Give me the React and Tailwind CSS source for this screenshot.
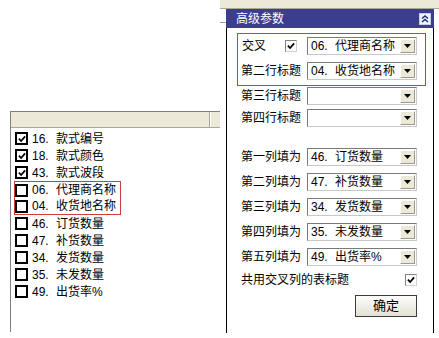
import React from "react";

const FONT = { fontFamily: '"Liberation Sans", "Noto Sans CJK SC", sans-serif' };

function Tick({ size = 9 }) {
  return (
    <svg width={size} height={size} viewBox="0 0 9 9">
      <path d="M1 4.2 L3.5 6.8 L8 1.6" fill="none" stroke="#000" strokeWidth="2" />
    </svg>
  );
}

function LeftBox({ checked }) {
  return (
    <div className="w-[13px] h-[13px] border-2 border-black bg-white flex items-center justify-center shrink-0">
      {checked ? <Tick size={8} /> : null}
    </div>
  );
}

function LeftRow({ num, text, checked, h = "h-[17px]", pl = "pl-[4px]" }) {
  return (
    <div className={`flex items-center ${h} ${pl}`}>
      <LeftBox checked={checked} />
      <span className="ml-[4px] w-[24px] shrink-0">{num}</span>
      <span className="whitespace-nowrap">{text}</span>
    </div>
  );
}

function WinBox({ checked }) {
  return (
    <div className="w-[12px] h-[12px] bg-white border border-t-[#808080] border-l-[#808080] border-r-[#d4d0c8] border-b-[#d4d0c8] flex items-center justify-center shrink-0">
      {checked ? <Tick size={8} /> : null}
    </div>
  );
}

function Select({ num, text }) {
  return (
    <div className="w-[110px] h-[18px] shrink-0 flex items-center bg-white border border-t-[#7a7a7a] border-l-[#7a7a7a] border-r-[#c8c8c8] border-b-[#c8c8c8]">
      <div className="flex-1 flex items-center pl-[3px] whitespace-nowrap overflow-hidden">
        {num ? <span className="w-[24px] shrink-0">{num}</span> : null}
        {text ? <span>{text}</span> : null}
      </div>
      <div className="w-[15px] h-[14px] mr-[1px] shrink-0 flex items-center justify-center bg-[#ece9d8] border border-t-white border-l-white border-r-[#9d9a8c] border-b-[#9d9a8c]">
        <svg width="7" height="4" viewBox="0 0 7 4">
          <path d="M0 0 H7 L3.5 4 Z" fill="#000" />
        </svg>
      </div>
    </div>
  );
}

function Row({ label, num, text, mt }) {
  return (
    <div className={`flex items-center h-[18px] pl-[14px] ${mt}`}>
      <span className="w-[66px] shrink-0 whitespace-nowrap">{label}</span>
      <Select num={num} text={text} />
    </div>
  );
}

export default function App() {
  return (
    <div
      className="w-[439px] h-[338px] bg-white flex text-[12px] leading-[14px] text-black overflow-hidden"
      style={FONT}
    >
      {/* left column */}
      <div className="w-[220px] shrink-0 pt-[111px] pl-[10px]">
        <div className="h-[221px] border-l border-t border-[#808080] flex flex-col">
          <div className="h-[16px] flex bg-[#ece9d8] border-b border-[#aca899]">
            <div className="w-[199px] border-r border-[#aca899]" />
            <div className="flex-1 border-l border-white" />
          </div>
          <div className="pt-[2px] flex flex-col">
            <LeftRow num="16." text="款式编号" checked />
            <LeftRow num="18." text="款式颜色" checked />
            <LeftRow num="43." text="款式波段" checked />
            <div className="ml-[3px] w-[107px] border border-[#d03c3c]">
              <LeftRow num="06." text="代理商名称" h="h-[16px]" pl="pl-0" />
              <LeftRow num="04." text="收货地名称" h="h-[16px]" pl="pl-0" />
            </div>
            <LeftRow num="46." text="订货数量" />
            <LeftRow num="47." text="补货数量" />
            <LeftRow num="34." text="发货数量" />
            <LeftRow num="35." text="未发数量" />
            <LeftRow num="49." text="出货率%" />
          </div>
        </div>
      </div>

      {/* right column */}
      <div className="flex-1 flex flex-col">
        <div className="h-[9px] bg-[#ece9d8] border-b border-[#aca899]" />
        <div className="flex flex-1">
          <div className="w-[6px] shrink-0 pt-[13px]">
            <div className="h-px bg-[#9a9a9a]" />
          </div>
          <div className="w-[208px] h-[324px] shrink-0 flex flex-col">
            <div className="h-[19px] bg-[#3d3d90] flex items-center justify-between pl-[10px] pr-[3px] text-white">
              <span className="leading-[14px]">高级参数</span>
              <div className="w-[12px] h-[12px] bg-[#f2f4fb] border border-[#c9cde8] flex items-center justify-center">
                <svg width="8" height="8" viewBox="0 0 8 8">
                  <path d="M1 3.5 L4 1 L7 3.5 M1 7 L4 4.5 L7 7" fill="none" stroke="#1c2a6e" strokeWidth="1.4" />
                </svg>
              </div>
            </div>
            <div className="flex-1 border-l border-r border-black flex flex-col">
              <div className="ml-[10px] mt-[5px] w-[189px] p-px bg-[#d03c3c]">
                <div className="bg-white pt-[3px] pb-[5px] pl-[3px] flex flex-col">
                  <div className="flex items-center h-[18px]">
                    <span className="w-[44px] pl-px shrink-0">交叉</span>
                    <WinBox checked />
                    <div className="w-[10px] shrink-0" />
                    <Select num="06." text="代理商名称" />
                  </div>
                  <div className="flex items-center h-[18px] mt-[7px]">
                    <span className="w-[66px] shrink-0 whitespace-nowrap">第二行标题</span>
                    <Select num="04." text="收货地名称" />
                  </div>
                </div>
              </div>
              <Row label="第三行标题" mt="mt-[1px]" />
              <Row label="第四行标题" mt="mt-[4px]" />
              <Row label="第一列填为" num="46." text="订货数量" mt="mt-[21px]" />
              <Row label="第二列填为" num="47." text="补货数量" mt="mt-[7px]" />
              <Row label="第三列填为" num="34." text="发货数量" mt="mt-[7px]" />
              <Row label="第四列填为" num="35." text="未发数量" mt="mt-[7px]" />
              <Row label="第五列填为" num="49." text="出货率%" mt="mt-[7px]" />
              <div className="flex items-center justify-between h-[18px] mt-[5px] pl-[14px] pr-[16px]">
                <span className="whitespace-nowrap">共用交叉列的表标题</span>
                <WinBox checked />
              </div>
              <div className="flex justify-end pr-[16px] mt-[6px]">
                <button className="w-[62px] h-[22px] flex items-center justify-center bg-gradient-to-b from-[#fdfdfb] to-[#e4e1d3] border border-[#3c3c3c] text-[13px]">
                  确定
                </button>
              </div>
            </div>
          </div>
          <div className="flex-1" />
        </div>
      </div>
    </div>
  );
}
